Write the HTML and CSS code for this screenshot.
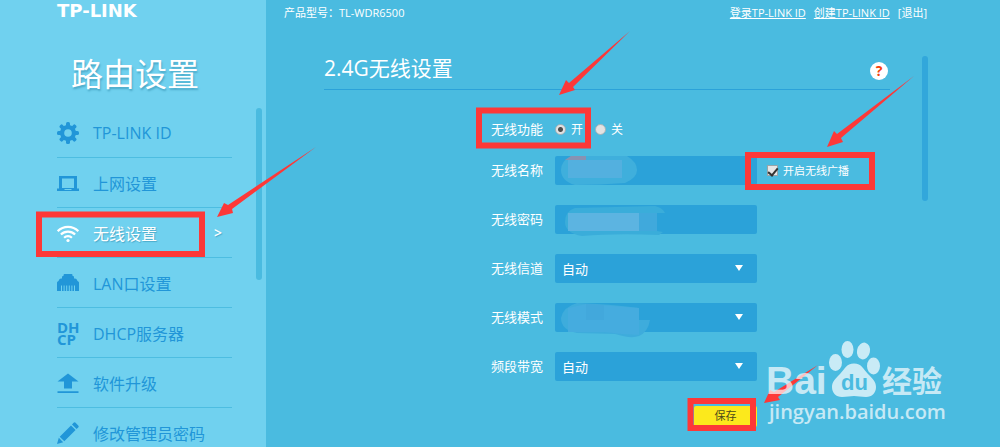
FILE: index.html
```html
<!DOCTYPE html>
<html lang="zh-CN">
<head>
<meta charset="utf-8">
<title>路由设置</title>
<link rel="stylesheet" href="styles.css">
</head>
<body>
<div class="app">
  <aside class="sidebar">
    <div class="logo">TP-LINK</div>
    <h1 class="side-title">路由设置</h1>
    <div class="side-body">
      <nav class="nav">
        <a class="nav-item" href="#"><svg class="icon" viewBox="0 0 22 22"><g fill="currentColor"><circle cx="11" cy="11" r="8"/><g id="t"><rect x="9" y="0" width="4" height="22" rx="1.6"/><rect x="0" y="9" width="22" height="4" rx="1.6"/></g><use href="#t" transform="rotate(45 11 11)"/></g><circle cx="11" cy="11" r="3.8" fill="#70d1ef"/></svg><span>TP-LINK ID</span></a>
        <a class="nav-item" href="#"><svg class="icon" viewBox="0 0 22 22"><path fill="currentColor" fill-rule="evenodd" d="M2 4h18v12.500h2V19H0v-2.500h2zM5 6.500v9.500h12V6.500zM7.500 17v1h7v-1z"/></svg><span>上网设置</span></a>
        <a class="nav-item active" href="#"><svg class="icon" viewBox="0 0 22 22"><g fill="none" stroke="currentColor" stroke-width="2.2"><path d="M.7 9.200a14.500 14.500 0 0 1 20.600 0"/><path d="M3.900 12.600a10 10 0 0 1 14.200 0"/><path d="M7.100 15.800a5.500 5.500 0 0 1 7.800 0"/></g><circle cx="11" cy="18.500" r="1.600" fill="currentColor"/></svg><span>无线设置</span><span class="chevron">&gt;</span></a>
        <a class="nav-item" href="#"><svg class="icon" viewBox="0 0 22 22"><path fill="currentColor" d="M0 19V10.500Q0 9.500 1.500 9L2 8q.3-1.500 2-1.500h1V5q0-1 1-1h.5V3q.2-1 1-1h7q1 0 1 1v1h.5q1 0 1 1v1.500h1q1.700 0 2 1.500l.5 1q1.500.5 1.500 1.500V19z"/><path stroke="#70d1ef" stroke-width="1" d="M4.500 13.500V19M7.100 13.500V19M9.700 13.500V19M12.300 13.500V19M14.900 13.500V19M17.500 13.500V19"/></svg><span>LAN口设置</span></a>
        <a class="nav-item" href="#"><span class="icon dhcp" aria-hidden="true"><span>DH</span><span>CP</span></span><span>DHCP服务器</span></a>
        <a class="nav-item" href="#"><svg class="icon" viewBox="0 0 22 22"><path fill="currentColor" d="M11 1.500 21.500 9.500H15v7H7v-7H.5zM.5 19.200h21V21H.5z"/></svg><span>软件升级</span></a>
        <a class="nav-item" href="#"><svg class="icon" viewBox="0 0 22 22"><path fill="currentColor" d="M0 22l1.800-6.200 4.400 4.400zM2.700 14.700 14 3.400l4.600 4.600L7.300 19.300zM15 2.400 16.600.8q1-1 2 0l2.600 2.600q1 1 0 2L19.600 7z"/></svg><span>修改管理员密码</span></a>
      </nav>
      <div class="scroll side-scroll"></div>
    </div>
  </aside>

  <main class="main">
    <header class="topbar">
      <span>产品型号：TL-WDR6500</span>
      <div class="links">
        <a href="#">登录TP-LINK ID</a>
        <a href="#">创建TP-LINK ID</a>
        <a class="plain" href="#">[退出]</a>
      </div>
    </header>
    <div class="content">
      <section class="panel">
        <div class="panel-head">
          <h2>2.4G无线设置</h2>
          <button class="help" type="button">?</button>
        </div>
        <form class="form">
          <div class="row row-switch">
            <span class="label">无线功能</span>
            <div class="radios">
              <input type="radio" name="wifi" id="on" checked><label for="on">开</label>
              <input type="radio" name="wifi" id="off"><label for="off">关</label>
            </div>
          </div>
          <div class="row">
            <label class="label" for="ssid">无线名称</label>
            <div class="field"><input class="box" id="ssid" type="text">
              <svg class="mask" viewBox="0 0 202 36"><path fill="#3fafdc" d="M16 0H72Q82 6 82 14T70 27Q45 29 20 29Q6 25 6 14Q6 5 16 0z"/><path fill="#53b0df" d="M13 4h54v18H13z"/><path fill="#8792b2" d="M16 0h15v4H10z"/></svg>
            </div>
            <input type="checkbox" id="cast" checked><label class="small" for="cast">开启无线广播</label>
          </div>
          <div class="row">
            <label class="label" for="pwd">无线密码</label>
            <div class="field"><input class="box" id="pwd" type="text">
              <svg class="mask" viewBox="0 0 202 36"><path fill="#3aadda" d="M20 3 100 1Q108 3 110 8H102V26l6 1-4 3Q60 28 27 31Q10 28 10 17Q10 6 20 3z"/><path fill="#5cb4e1" d="M13 8h71v18H13z"/><path fill="#40a9dc" d="M84 8h18v18H84z"/></svg>
            </div>
          </div>
          <div class="row">
            <label class="label" for="channel">无线信道</label>
            <div class="field pick"><select class="box" id="channel"><option>自动</option></select></div>
          </div>
          <div class="row">
            <label class="label" for="mode">无线模式</label>
            <div class="field pick"><select class="box" id="mode"><option></option></select>
              <svg class="mask" viewBox="0 0 202 36"><path fill="#3eacdc" d="M22 0Q55 1 84 5V17H95Q93 29 84 33Q76 36 60 31L22 30Q6 27 6 15Q8 4 22 0z"/><path fill="#45acdf" d="M13 5 31 1 84 5V32L66 31 49 29H13z"/><path fill="#42a8dc" d="M31 1 49 2V17H31z"/></svg>
            </div>
          </div>
          <div class="row">
            <label class="label" for="band">频段带宽</label>
            <div class="field pick"><select class="box" id="band"><option>自动</option></select></div>
          </div>
          <div class="actions"><button class="save" type="submit">保存</button></div>
        </form>
      </section>
      <div class="scroll main-scroll"></div>
    </div>
  </main>

  <svg class="notes" width="1000" height="447" viewBox="0 0 1000 447">
    <g fill="none" stroke="#fd3838" stroke-width="6">
      <rect x="39" y="214.500" width="163" height="39.500"/>
      <rect x="479" y="110.500" width="109" height="35"/>
      <rect x="748" y="155" width="124" height="32"/>
      <rect x="690.500" y="401" width="62.500" height="27"/>
    </g>
    <g fill="#fd3838">
      <path d="M316 147 232 209 233 213 217 217 224 203 228 205z"/>
      <path d="M630 31 573 87 575 90 559 95 566 80 569 83z"/>
      <path d="M914 76 841 138 843 142 827 147 834 131 837 134z"/>
      <path d="M818 365 778 397 780 400 764 403 770 390 774 392z"/>
    </g>
    <g fill="#fff" fill-opacity=".7">
      <text class="wm-bai" x="766" y="394">Bai</text>
      <ellipse cx="835.500" cy="362.500" rx="6.500" ry="8.500"/>
      <ellipse cx="847.500" cy="349.500" rx="6" ry="8.500"/>
      <ellipse cx="863.500" cy="351" rx="6.500" ry="8.500" transform="rotate(12 863.500 351)"/>
      <ellipse cx="873.500" cy="366" rx="6.500" ry="8.500"/>
      <path d="M854 363.500C862 363.500 863 369 868 374C873 379 876 382 876 387C876 393 872 397 866 397C861 397 858 396 854 396C850 396 847 397 842 397C836 397 832 393 832 387C832 382 835 379 840 374C845 369 846 363.500 854 363.500z"/>
      <text class="wm-cn" x="882" y="392">经验</text>
      <text class="wm-url" x="769" y="419">jingyan.baidu.com</text>
    </g>
    <text class="wm-du" x="841" y="390">du</text>
  </svg>
</div>
</body>
</html>
```
FILE: styles.css
```css
* { box-sizing: border-box; }
body {
  margin: 0;
  font-family: "Open Sans", "Noto Sans CJK SC", sans-serif;
  color: #fff;
}
a { color: inherit; }
h1, h2 { margin: 0; font-weight: 400; }
input, select, button { font-family: inherit; margin: 0; }

.app {
  position: relative;
  display: flex;
  height: 100vh;
  overflow: hidden;
  background: #4abbe0;
}

/* Sidebar */
.sidebar {
  flex: 0 0 266px;
  padding-left: 57px;
  background: #70d1ef;
}
.logo {
  height: 22px;
  font: bold 18px/22px "DejaVu Sans", sans-serif;
}
.side-title {
  padding: 28px 0 0 14px;
  font-size: 32px;
  line-height: 48px;
  text-shadow: 1px 2px 2px #4aa9c8;
}
.side-body { display: flex; gap: 24px; margin-top: 10px; }
.nav { width: 175px; }
.nav-item {
  display: flex;
  align-items: center;
  gap: 14px;
  height: 50px;
  border-bottom: 1px solid #4dbde1;
  color: #2196d8;
  font-size: 16px;
  text-decoration: none;
  white-space: nowrap;
}
.nav-item.active {
  color: #fff;
  text-shadow: 1px 1px 1px #4aa9c8;
}
.chevron { margin-left: auto; padding-right: 10px; font-size: 14px; font-weight: 600; }
.icon { flex: 0 0 22px; width: 22px; height: 22px; }
.dhcp {
  display: flex;
  flex-direction: column;
  justify-content: center;
  font-size: 15px;
  font-weight: 700;
  line-height: 12px;
}
.scroll { width: 6px; border-radius: 3px; }
.side-scroll { height: 172px; background: #4abbe0; }

/* Main */
.main { flex: 1; min-width: 0; }
.topbar {
  display: flex;
  justify-content: space-between;
  padding: 4px 73px 0 18px;
  font-size: 11px;
  line-height: 18px;
}
.links { display: flex; gap: 8px; }
.links .plain { text-decoration: none; }
.content { display: flex; gap: 32px; padding: 34px 72px 0 58px; }
.panel { flex: 1; }
.main-scroll { height: 145px; background: #32a7db; }
.panel-head {
  display: flex;
  align-items: center;
  justify-content: space-between;
  height: 34px;
  border-bottom: 1px solid #2ba2d9;
}
.panel-head h2 { padding-bottom: 10px; font-size: 21px; line-height: 24px; }
.help {
  width: 18px;
  height: 18px;
  margin: 0 2px 4px 0;
  padding: 0;
  border: 0;
  border-radius: 50%;
  background: #fff;
  color: #f4420b;
  font-size: 14px;
  font-weight: 700;
  line-height: 18px;
}
.form { padding: 25px 0 0 167px; }
.row { display: flex; align-items: center; height: 29px; margin-bottom: 20px; }
.row-switch { margin-bottom: 12px; }
.label { flex: 0 0 64px; font-size: 13px; line-height: 18px; padding-bottom: 1px; }
.radios { display: flex; align-items: center; font-size: 12px; }
.radios label { padding: 0 12px 2px 5px; }
input[type="radio"] {
  appearance: none;
  width: 11px;
  height: 11px;
  border: 1px solid #a3b2b8;
  border-radius: 50%;
  background: #e2e2e2;
}
input[type="radio"]:checked {
  background: radial-gradient(circle, #4c4c4c 2px, #e2e2e2 3px);
}
input[type="checkbox"] {
  appearance: none;
  width: 11px;
  height: 11px;
  margin-left: 10px;
  border: 1px solid #98a4a8;
  background: #e6e6e6;
  display: grid;
  place-items: center;
}
input[type="checkbox"]:checked::after {
  content: "";
  width: 4px;
  height: 8px;
  border: solid #333;
  border-width: 0 2px 2px 0;
  transform: rotate(40deg);
}
.small { padding: 0 0 2px 5px; font-size: 11px; }
.field { position: relative; width: 202px; height: 29px; }
.box {
  appearance: none;
  display: block;
  width: 100%;
  height: 100%;
  padding: 0 7px;
  border: 0;
  border-radius: 2px;
  background: #2ba2d9;
  color: #fff;
  font-size: 13px;
}
.pick::after {
  content: "";
  position: absolute;
  right: 14px;
  top: 11px;
  border: solid transparent;
  border-width: 6px 4px 0;
  border-top-color: #fff;
}
.mask { position: absolute; left: 0; top: 0; width: 202px; height: 36px; pointer-events: none; }
.actions { width: 266px; padding-top: 2px; text-align: right; }
.save {
  width: 63px;
  height: 21px;
  padding: 0;
  border: 0;
  border-radius: 2px;
  background: #fce91c;
  color: #4c4a1a;
  font-size: 11px;
  line-height: 20px;
}

/* Callouts and watermark above the page */
.notes { position: absolute; left: 0; top: 0; pointer-events: none; }
.wm-bai { font: bold 39px "Liberation Sans", sans-serif; }
.wm-cn { font: bold 30px "Noto Sans CJK SC", sans-serif; }
.wm-url { font: 600 20px "Open Sans", sans-serif; }
.wm-du { font: bold 22px "Liberation Sans", sans-serif; fill: #4abbe0; }
```
